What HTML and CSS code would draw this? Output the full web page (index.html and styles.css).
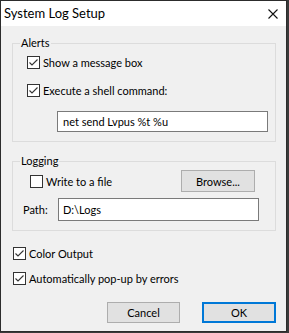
FILE: index.html
```html
<!DOCTYPE html>
<html>
<head>
<meta charset="utf-8">
<link rel="stylesheet" href="styles.css">
</head>
<body>
<div class="window">
  <div class="titlebar">
    <span class="title">System Log Setup</span>
    <span class="close"><svg width="10" height="10" viewBox="0 0 10 10"><path d="M0.5 0.5 L9.5 9.5 M9.5 0.5 L0.5 9.5" stroke="#111" stroke-width="1.1" fill="none"/></svg></span>
  </div>
  <div class="client">
    <div class="group alerts">
      <span class="legend">Alerts</span>
      <label class="check chk-show"><span class="box"><svg width="11" height="11" viewBox="0 0 11 11"><path d="M1.5 5.5 L4 8 L9.5 2.5" stroke="#333" stroke-width="1.1" fill="none"/></svg></span>Show a message box</label>
      <label class="check chk-exec"><span class="box"><svg width="11" height="11" viewBox="0 0 11 11"><path d="M1.5 5.5 L4 8 L9.5 2.5" stroke="#333" stroke-width="1.1" fill="none"/></svg></span>Execute a shell command:</label>
      <div class="edit cmd">net send Lvpus %t %u</div>
    </div>
    <div class="group logging">
      <span class="legend">Logging</span>
      <div class="row write-row">
        <label class="check chk-write"><span class="box"></span>Write to a file</label>
        <button class="btn browse">Browse...</button>
      </div>
      <div class="row path-row">
        <span class="path-label">Path:</span>
        <div class="edit path">D:\Logs</div>
      </div>
    </div>
    <label class="check chk-color"><span class="box"><svg width="11" height="11" viewBox="0 0 11 11"><path d="M1.5 5.5 L4 8 L9.5 2.5" stroke="#333" stroke-width="1.1" fill="none"/></svg></span>Color Output</label>
    <label class="check chk-popup"><span class="box"><svg width="11" height="11" viewBox="0 0 11 11"><path d="M1.5 5.5 L4 8 L9.5 2.5" stroke="#333" stroke-width="1.1" fill="none"/></svg></span>Automatically pop-up by errors</label>
    <div class="buttons">
      <button class="btn cancel">Cancel</button>
      <button class="btn ok">OK</button>
    </div>
  </div>
</div>
</body>
</html>
```
FILE: styles.css
```css
html, body {
  margin: 0;
  padding: 0;
}
body {
  background: #3a3a3a;
  width: 289px;
  height: 333px;
  overflow: hidden;
  font-family: Lato, "Noto Sans", sans-serif;
  font-size: 11px;
  color: #000;
}
.window {
  box-sizing: border-box;
  width: 287px;
  height: 332px;
  border: 1px solid #2c2c2c;
  background: #f0f0f0;
  display: flex;
  flex-direction: column;
}
.titlebar {
  height: 25px;
  background: #fff;
  display: flex;
  align-items: center;
  justify-content: space-between;
  padding: 0 8px 0 3px;
  flex-shrink: 0;
}
.title {
  font-size: 13px;
  line-height: 25px;
  padding-bottom: 1px;
}
.close {
  display: flex;
  width: 10px;
  height: 10px;
  margin-top: 1px;
}
.client {
  display: flex;
  flex-direction: column;
  padding: 17px 10px 0 11px;
}
.group {
  position: relative;
  box-sizing: border-box;
  border: 1px solid #dcdcdc;
  display: flex;
  flex-direction: column;
}
.legend {
  position: absolute;
  top: -9px;
  left: 7px;
  padding: 0 1px;
  background: #f0f0f0;
  line-height: 16px;
}
.alerts {
  height: 99px;
}
.logging {
  height: 70px;
  margin-top: 19px;
}
.check {
  display: flex;
  align-items: center;
  height: 13px;
  line-height: 13px;
  white-space: nowrap;
}
.box {
  box-sizing: border-box;
  width: 13px;
  height: 13px;
  border: 1px solid #333;
  background: #fff;
  margin-right: 3px;
  display: flex;
  align-items: center;
  justify-content: center;
  flex-shrink: 0;
}
.box svg { display: block; }
.chk-show { margin: 12px 0 0 14px; }
.chk-exec { margin: 15px 0 0 14px; }
.edit {
  box-sizing: border-box;
  background: #fff;
  border: 1px solid #7a7a7a;
  padding-left: 5px;
  display: flex;
  align-items: center;
  white-space: nowrap;
}
.cmd {
  margin: 14px 0 0 44px;
  width: 211px;
  height: 21px;
}
.row {
  display: flex;
  align-items: center;
}
.write-row {
  margin-top: 8px;
  height: 22px;
}
.chk-write { margin-left: 17px; }
.btn {
  box-sizing: border-box;
  font-family: inherit;
  font-size: 11px;
  color: #000;
  background: #e1e1e1;
  border: 1px solid #adadad;
  padding: 0;
  margin: 0;
  display: flex;
  align-items: center;
  justify-content: center;
}
.browse {
  margin-left: auto;
  margin-right: 20px;
  width: 74px;
  height: 22px;
}
.path-row {
  margin-top: 6px;
}
.path-label {
  margin-left: 10px;
  width: 35px;
}
.path {
  width: 201px;
  height: 23px;
  padding-left: 4px;
}
.chk-color { margin: 16px 0 0 1px; }
.chk-popup { margin: 12px 0 0 1px; }
.buttons {
  display: flex;
  justify-content: flex-end;
  gap: 22px;
  margin-top: 17px;
}
.cancel {
  width: 73px;
  height: 21px;
}
.ok {
  width: 74px;
  height: 21px;
  border: 2px solid #0078d7;
}
```
